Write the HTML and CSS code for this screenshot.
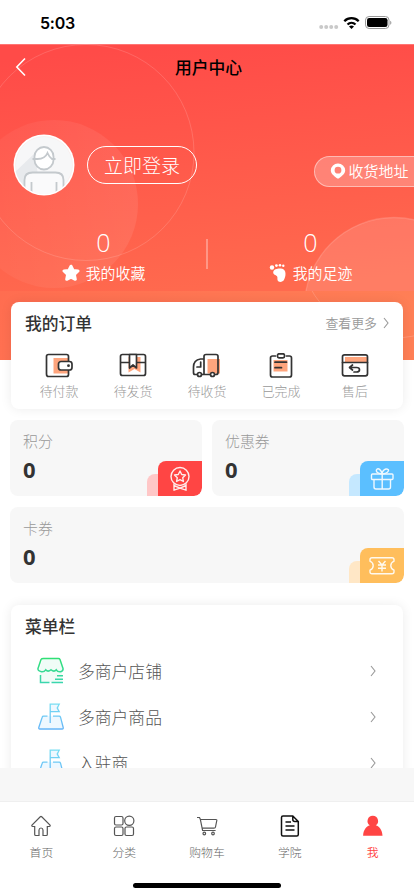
FILE: index.html
```html
<!DOCTYPE html>
<html lang="zh-CN">
<head>
<meta charset="utf-8">
<meta name="viewport" content="width=device-width, initial-scale=1">
<title>用户中心</title>
<link rel="stylesheet" href="styles.css">
</head>
<body>
<div class="app">
  <div class="status">
    <span class="clock">5:03</span>
    <svg class="status-icons" width="76" height="16" viewBox="0 0 76 16">
      <g fill="#c9c9c9"><circle cx="3.200" cy="12" r="2"/><circle cx="8.200" cy="12" r="2"/><circle cx="13.200" cy="12" r="2"/><circle cx="18.200" cy="12" r="2"/></g>
      <g fill="none" stroke="#000" stroke-width="2.300"><path d="M26.300 6.200a10.200 10.200 0 0 1 14.400 0"/><path d="M29.500 9.500a5.800 5.800 0 0 1 8 0"/></g>
      <path d="M31 11.600a3.700 3.700 0 0 1 5 0L33.500 14z"/>
      <rect x="47.500" y="1.500" width="23.500" height="12" rx="3.600" fill="none" stroke="#999"/>
      <rect x="49" y="3" width="20.500" height="9" rx="2.200"/>
      <path d="M72.300 5.800v4c1.400-.6 1.400-3.400 0-4z" fill="#888"/>
    </svg>
  </div>

  <main class="page">
    <section class="hero">
      <svg class="hero-art" width="414" height="316" viewBox="0 0 414 316">
        <defs>
          <linearGradient id="top" x1=".42" y1="0" x2=".58" y2="1"><stop offset="0" stop-color="#ff4b48"/><stop offset="1" stop-color="#ff6a4e"/></linearGradient>
          <linearGradient id="low" x1="0" y1="0" x2="1" y2=".2"><stop offset="0" stop-color="#ff6d50"/><stop offset="1" stop-color="#ff7f56"/></linearGradient>
          <linearGradient id="disc" x1="0" y1="0" x2="1" y2="0"><stop offset="0" stop-color="#fff" stop-opacity=".03"/><stop offset="1" stop-color="#fff" stop-opacity=".08"/></linearGradient>
          <clipPath id="cut"><path d="M0 0h414v247H0z"/></clipPath>
          <clipPath id="rest"><path d="M0 247h414v69H0z"/></clipPath>
        </defs>
        <path fill="url(#top)" d="M0 0h414v247H0z"/>
        <path fill="url(#low)" d="M0 247h414v69H0z"/>
        <path d="M0 .5h414" stroke="#ff7573"/>
        <g clip-path="url(#cut)" stroke="#fff" stroke-opacity=".15">
          <circle cx="86" cy="108.500" r="108" fill="none"/>
          <circle cx="54" cy="160" r="84" fill="url(#disc)" stroke="none"/>
          <circle cx="394" cy="263" r="89.500" fill="#fff" fill-opacity=".13" stroke-width="1.300"/>
        </g>
        <circle cx="394" cy="199" r="95" fill="none" stroke="#fff" stroke-opacity=".16" clip-path="url(#rest)"/>
      </svg>
      <header class="nav">
        <svg class="back" width="12" height="20" viewBox="0 0 12 20" fill="none" stroke="#fff" stroke-width="1.600"><path d="M10 1.500 1.800 10l8.200 8.500"/></svg>
        <h1>用户中心</h1>
      </header>
      <div class="profile">
        <svg class="avatar" width="62" height="62" viewBox="0 0 62 62">
          <defs><clipPath id="face"><circle cx="31" cy="31" r="29"/></clipPath></defs>
          <circle cx="31" cy="31" r="30.500" fill="#fff"/>
          <circle cx="31" cy="31" r="28.500" fill="#f7f7f8" stroke="#f9e9e8" stroke-width=".6"/>
          <g clip-path="url(#face)">
            <path d="M22 19 2 38v22h16V42h7z" fill="#e8eaed"/>
            <path d="M12 62V46q0-7 8-7h22q8 0 8 7v16z" fill="#fafafb"/>
            <g fill="none" stroke="#c4c9cd" stroke-width="1.800">
              <path d="M11.500 62V46q0-7.500 8-7.500h23q8 0 8 7.500v16M18.500 62V48M43.500 62V48"/>
              <path d="M21.500 23.500v-1a9.500 9.500 0 0 1 19 0V26a9.500 9.500 0 0 1-19 0z" fill="#fff"/>
              <path d="M19.500 25h5q7.500 0 10-6 2 4.500 4.500 6h3.500"/>
            </g>
          </g>
        </svg>
        <a class="login">立即登录</a>
        <a class="address">
          <svg width="16" height="16" viewBox="0 0 16 16"><path fill="#fff" fill-rule="evenodd" d="M8 .5a7 7 0 0 0-7.200 6.800c0 3.600 3.400 5.800 5.800 7.600q1.400 1.100 2.800 0c2.400-1.800 5.800-4 5.800-7.600A7 7 0 0 0 8 .5zM8 3.800a3.400 3.400 0 1 1 0 6.800 3.400 3.400 0 0 1 0-6.800z"/></svg>
          收货地址
        </a>
      </div>
      <div class="counters">
        <div class="counter">
          <b>0</b>
          <span><svg width="18" height="18" viewBox="0 0 18 18"><path fill="#fff" stroke="#fff" stroke-width="3" stroke-linejoin="round" d="m9 2.200 2.100 4.200 4.900.6-3.600 3.400.9 4.900L9 13.100l-4.300 2.200.9-4.900L2 7l4.900-.6z"/></svg>我的收藏</span>
        </div>
        <div class="counter">
          <b>0</b>
          <span><svg width="18" height="20" viewBox="0 0 18 20" fill="#fff"><circle cx="3" cy="4.500" r="2.200"/><circle cx="7.400" cy="2.600" r="1.400"/><circle cx="11" cy="2.200" r="1.300"/><circle cx="14.300" cy="2.800" r="1.200"/><path d="M4.200 9.500C4.500 5.800 9 5.400 12 5.600c3.200.3 4.500 2.600 4.500 5.200 0 3-.8 4.400-1.600 6.200-.8 2-5.400 2.900-6.300.3-.6-1.700.4-3-.8-4.200-1.100-1.200-3.600-1.400-3.600-3.600z"/></svg>我的足迹</span>
        </div>
      </div>
    </section>

    <section class="card orders">
      <div class="card-head">
        <h2>我的订单</h2>
        <a class="more">查看更多<svg width="7" height="12" viewBox="0 0 7 12"><path d="m1 1 4 5-4 5"/></svg></a>
      </div>
      <div class="order-list">
        <div class="order">
          <svg width="30" height="26" viewBox="0 0 30 26"><path class="tint" d="M9.500 5H24v15.500H9.500z"/><g class="line"><path d="M24.500 8V3.500q0-2-2-2h-18q-2 0-2 2V21q0 2.500 2 2.500h18q2 0 2-2V17"/><rect x="14.500" y="8.500" width="13.500" height="8.500" rx="2.500" fill="#fff"/></g><circle cx="24.500" cy="12.700" r="1.400" fill="#333"/></svg>
          <span>待付款</span>
        </div>
        <div class="order">
          <svg width="30" height="26" viewBox="0 0 30 26"><path class="tint" d="M10.500 4h12v15.500L16.500 16l-6 3.500z"/><g class="line"><rect x="2.500" y="1.500" width="25" height="21" rx="2"/><path d="M3 9.500h8M19 9.500h8"/><path fill="#fff" d="M11.500 1.500h7V15L15 12l-3.500 3z"/></g></svg>
          <span>待发货</span>
        </div>
        <div class="order">
          <svg width="30" height="26" viewBox="0 0 30 26"><path class="tint" d="M15.500 6H28v14.500H15.500z"/><g class="line"><path d="M5.500 21.500H3q-1.500 0-1.500-2V14q0-7 7-8H12M12 21.500V3.500q0-2 2-2h10q2 0 2 2v16q0 2-2 2h-1.500M9.500 21.500h9.500M8.700 9v5H5"/><circle cx="7.500" cy="21.500" r="2" fill="#fff"/><circle cx="20.500" cy="21.500" r="2" fill="#fff"/></g></svg>
          <span>待收货</span>
        </div>
        <div class="order">
          <svg width="30" height="26" viewBox="0 0 30 26"><path class="tint" d="M7.500 7h14v11.500h-14z"/><g class="line"><path d="M9.500 3H6.500q-2 0-2 2v17q0 2 2 2h17q2 0 2-2V5q0-2-2-2h-3"/><rect x="11.500" y=".8" width="7" height="4" rx="1.500"/><path d="M9 9.200h11.500M9 14.700h6.500"/></g></svg>
          <span>已完成</span>
        </div>
        <div class="order">
          <svg width="30" height="26" viewBox="0 0 30 26"><path class="tint" d="M5 4h22v5H5z"/><g class="line"><rect x="2.500" y="1.800" width="25" height="21" rx="2"/><path d="M2.500 9.500h25M12.500 12 9.500 14.500l3 2.500M10 14.500h6.500q3 0 3 2.200 0 2.300-3 2.300H14"/></g></svg>
          <span>售后</span>
        </div>
      </div>
    </section>

    <section class="assets">
      <div class="asset red">
        <span>积分</span><b>0</b>
        <i class="shade"></i>
        <i class="badge"><svg width="26" height="26" viewBox="0 0 26 26"><circle cx="13" cy="10.500" r="9"/><path d="m13 5 1.700 3.500 3.800.5-2.800 2.700.7 3.800-3.400-1.800-3.400 1.800.7-3.800L7.500 9l3.800-.5z"/><path d="M7 17.500v6.700l6-2 6 2v-6.700M7 19.500l6 2.700 6-2.700"/></svg></i>
      </div>
      <div class="asset blue">
        <span>优惠券</span><b>0</b>
        <i class="shade"></i>
        <i class="badge"><svg width="26" height="26" viewBox="0 0 26 26"><rect x="2.500" y="8" width="21.500" height="5.500" rx="1"/><path d="M5 13.500V21q0 2 2 2h12.500q2 0 2-2v-7.500M13.200 8v15M13 8Q6.500 7 7.500 3.800C9 1 12.500 4 13 8q.5-4 4-5c4-.3 3.500 4-4 5"/></svg></i>
      </div>
      <div class="asset wide gold">
        <span>卡券</span><b>0</b>
        <i class="shade"></i>
        <i class="badge"><svg width="26" height="26" viewBox="0 0 26 26"><path d="M3 4.700h20q2 0 2 2v1.500q-3.200 1.500-3.200 4.500t3.200 4.500v1.500q0 2-2 2H3q-2 0-2-2v-1.500q3.200-1.500 3.200-4.500T1 8.200V6.700q0-2 2-2z"/><path d="m9.500 8 3.500 4 3.500-4M13 12v6.500M9 12h8M9 15.200h8"/></svg></i>
      </div>
    </section>

    <section class="card menu">
      <h2>菜单栏</h2>
      <a class="entry">
        <svg class="ico" width="28" height="28" viewBox="0 0 28 28"><defs><linearGradient id="g" x1="0" y1="0" x2="0" y2="28" gradientUnits="userSpaceOnUse"><stop offset="0" stop-color="#2fe072"/><stop offset="1" stop-color="#3cd5b4"/></linearGradient></defs><path fill="#f0fcf7" d="M3 14h22v11H3zM6 2h16l4 11-4 2H6l-4-2z"/><g fill="none" stroke="url(#g)" stroke-width="1.500"><path d="M6.500 1.500h15q1 0 1.500 1l3 9q.5 2.500-2.500 3.200-3 .3-4.200-1.900-2.200 2.600-5.300 0-3.100 2.600-5.300 0-1.400 2.200-4.200 1.900-4-.7-3.500-3.200l3-9q.5-1 2.500-1z"/><path d="M3.500 18v7.500h9M14.500 25.500H26M20 18.700h6M18 22.200h8"/></g></svg>
        <span>多商户店铺</span>
        <svg class="chev" width="7" height="12" viewBox="0 0 7 12"><path d="m1 1 4 5-4 5"/></svg>
      </a>
      <a class="entry">
        <svg class="ico" width="28" height="28" viewBox="0 0 28 28"><defs><linearGradient id="f" x1="0" y1="0" x2="0" y2="28" gradientUnits="userSpaceOnUse"><stop offset="0" stop-color="#78dff2"/><stop offset="1" stop-color="#62b1f8"/></linearGradient></defs><path fill="#eef8ff" d="M6 13h17l3 12.500H2zM13 1.500h9V9h-9z"/><g fill="none" stroke="url(#f)" stroke-width="1.300"><path d="M10.500 13.200H6.500q-1 0-1.300 1L1.800 24.500q-.3 1.500 1 1.500h22.400q1.300 0 1-1.500L23.500 14.200q-.3-1-1.300-1H16"/><path d="M13.200 20V1.200h9l-2 3.800 2 3.700h-9"/></g></svg>
        <span>多商户商品</span>
        <svg class="chev" width="7" height="12" viewBox="0 0 7 12"><path d="m1 1 4 5-4 5"/></svg>
      </a>
      <a class="entry">
        <svg class="ico" width="28" height="28" viewBox="0 0 28 28"><path fill="#eef8ff" d="M6 13h17l3 12.500H2zM13 1.500h9V9h-9z"/><g fill="none" stroke="url(#f)" stroke-width="1.300"><path d="M10.500 13.200H6.500q-1 0-1.300 1L1.800 24.500q-.3 1.500 1 1.500h22.400q1.300 0 1-1.500L23.500 14.200q-.3-1-1.300-1H16"/><path d="M13.200 20V1.200h9l-2 3.800 2 3.700h-9"/></g></svg>
        <span>入驻商</span>
        <svg class="chev" width="7" height="12" viewBox="0 0 7 12"><path d="m1 1 4 5-4 5"/></svg>
      </a>
    </section>
  </main>

  <div class="gap"></div>

  <nav class="tabs">
    <a class="tab"><svg width="24" height="24" viewBox="0 0 24 24"><path d="M12.700 2.800a1 1 0 0 0-1.400 0L3 11q-.7 1.300.8 1.500h1.900v8q0 1 1 1H10v-5.500q.2-2 2-2t2 2v5.500h3.300q1 0 1-1v-8h1.900q1.500-.2.800-1.500z"/></svg>首页</a>
    <a class="tab"><svg width="24" height="24" viewBox="0 0 24 24"><rect x="2.500" y="2.500" width="8.500" height="8.500" rx="1.500"/><circle cx="17.300" cy="6.800" r="4.600"/><rect x="2.500" y="13" width="8.500" height="8.500" rx="1.500"/><rect x="13" y="13" width="8.500" height="8.500" rx="1.500"/></svg>分类</a>
    <a class="tab"><svg width="24" height="24" viewBox="0 0 24 24"><path d="M2 3.500h2.500l.8 1.700 2.300 11.300h13M5.500 5.500H21q1 0 .8 1l-1.300 6.500q-.2 1.200-1.500 1.200H7.200"/><circle cx="9.300" cy="19.500" r="1.300"/><circle cx="18" cy="19.500" r="1.300"/></svg>购物车</a>
    <a class="tab dark"><svg width="24" height="24" viewBox="0 0 24 24"><path d="M14.800 2H5Q3.500 2 3.500 3.500v17Q3.500 22 5 22h13.800q1.500 0 1.500-1.500V7.500zM14.800 2v3.500q0 2 2 2h3.500M7.500 8h5.500M7.500 12h9M7.500 16h9"/></svg>学院</a>
    <a class="tab active"><svg width="24" height="24" viewBox="0 0 24 24"><path d="M11.800 1.800a5.200 5.200 0 0 1 3 9.500c3.500 1.200 6.500 4.700 6.700 10.500H2.100c.2-5.800 3.200-9.300 6.700-10.500a5.200 5.200 0 0 1 3-9.500z"/></svg>我</a>
    <i class="home-bar"></i>
  </nav>
</div>
</body>
</html>
```
FILE: styles.css
```css
* { box-sizing: border-box; margin: 0; padding: 0; }
body { background: #fff; font-family: "Noto Sans CJK SC", sans-serif; color: #333; }
svg { display: block; flex: none; }
i { font-style: normal; }
.app { width: 414px; height: 896px; display: flex; flex-direction: column; overflow: hidden; }

.status { flex: none; height: 44px; padding: 2px 20px 0 40px; display: flex; align-items: center; justify-content: space-between; background: #fff; }
.clock { font: 600 16px/20px Inter, sans-serif; letter-spacing: -.25px; color: #000; }

.page { flex: none; height: 724px; overflow: hidden; background: #fff; }
.hero { position: relative; height: 316px; color: #fff; }
.hero-art { position: absolute; left: 0; top: 0; }
.nav { position: relative; height: 44px; padding: 1px 0 0 3px; display: flex; align-items: center; justify-content: center; }
.nav h1 { font-size: 16.8px; line-height: 24px; font-weight: 500; color: #000; }
.back { position: absolute; left: 15px; top: 13px; }

.profile { position: relative; margin-top: 46px; padding-left: 13px; height: 62px; display: flex; align-items: center; }
.login { margin-left: 12px; width: 110px; height: 38px; border: 1px solid #fff; border-radius: 19px; text-align: center; font-size: 19px; line-height: 35px; font-weight: 300; }
.address { margin: 12px 0 0 auto; width: 100px; height: 31px; padding-left: 14.5px; display: flex; align-items: center; gap: 3px; border: 1px solid rgba(255,255,255,.45); border-right: 0; border-radius: 16px 0 0 16px; background: rgba(255,255,255,.24); font-size: 15px; line-height: 28px; font-weight: 350; white-space: nowrap; }

.counters { position: relative; margin-top: 30px; display: flex; }
.counters::after { content: ""; position: absolute; left: 206px; top: 13px; width: 2px; height: 30px; background: rgba(255,255,255,.32); }
.counter { width: 207px; display: flex; flex-direction: column; align-items: center; }
.counter b { font: 300 25px/32px "Open Sans", sans-serif; }
.counter span { display: flex; align-items: center; gap: 6px; font-size: 14.900px; line-height: 20px; margin-top: 5px; font-weight: 350; }

.card { margin: 0 11px; border-radius: 8px; background: #fff; box-shadow: 0 0 12px rgba(0,0,0,.08); position: relative; }
.card h2 { font-size: 16.800px; line-height: 24px; font-weight: 500; }
.orders { margin-top: -58px; height: 107px; }
.card-head { display: flex; justify-content: space-between; padding: 9px 13px 0 14px; }
.more { display: flex; align-items: center; gap: 6px; font-size: 12.900px; line-height: 22px; color: #999; font-weight: 350; }
.more svg, .chev { fill: none; stroke: #999; stroke-width: 1.100; }
.order-list { display: flex; padding: 18px 11px 0; }
.order { width: 74px; display: flex; flex-direction: column; align-items: center; font-size: 12.900px; line-height: 20px; color: #999; font-weight: 300; }
.order span { margin-top: 2px; }
.line { fill: none; stroke: #333; stroke-width: 1.700; stroke-linecap: round; stroke-linejoin: round; }
.tint { fill: #ffa57d; }

.assets { margin: 11px 10px 0; display: grid; grid-template-columns: 1fr 1fr; gap: 11px 10px; }
.asset { position: relative; height: 76px; padding: 10px 13px; border-radius: 8px; background: #f7f7f7; overflow: hidden; display: flex; flex-direction: column; }
.asset span { font-size: 14.900px; line-height: 22px; color: #999; font-weight: 300; }
.asset b { font: 700 22px/28px "Noto Sans", sans-serif; margin-top: 3px; }
.wide { grid-column: 1 / 3; }
.badge { position: absolute; right: 0; bottom: 0; width: 44px; height: 35px; border-radius: 8px 0 8px 0; display: flex; align-items: center; justify-content: center; }
.badge svg { fill: none; stroke: #fff; stroke-width: 1.400; stroke-linejoin: round; opacity: .9; }
.shade { position: absolute; right: 44px; bottom: 0; width: 11px; height: 22px; border-radius: 8px 0 0 0; }
.red .badge { background: #ff4544; } .red .shade { background: #ffc7c7; }
.blue .badge { background: #5bbfff; } .blue .shade { background: #c5e8ff; }
.gold .badge { background: #ffbe5c; } .gold .shade { background: #ffe7c6; }

.menu { margin-top: 22px; padding-top: 9px; height: 200px; }
.menu h2 { padding-left: 14px; margin-bottom: 10px; }
.entry { display: flex; align-items: center; height: 46px; padding: 0 26px; font-size: 16.800px; line-height: 24px; font-weight: 300; color: #555; }
.entry span { margin: 0 0 1px 13px; flex: 1; }

.gap { flex: none; height: 33px; background: #f7f7f7; }
.tabs { flex: none; position: relative; height: 95px; padding-top: 12px; border-top: 1px solid #efefef; background: #fff; display: flex; }
.tab { flex: 1; display: flex; flex-direction: column; align-items: center; gap: 5px; font-size: 11.800px; line-height: 18px; font-weight: 300; color: #666; }
.tab svg { fill: none; stroke: #555; stroke-width: 1.200; }
.tab.dark svg { stroke: #111; stroke-width: 1.500; }
.tab.active { color: #ff4544; font-weight: 350; }
.tab.active svg { fill: #ff4544; stroke: none; }
.home-bar { position: absolute; left: 133px; bottom: 8px; width: 148px; height: 5px; border-radius: 3px; background: #000; }
```
